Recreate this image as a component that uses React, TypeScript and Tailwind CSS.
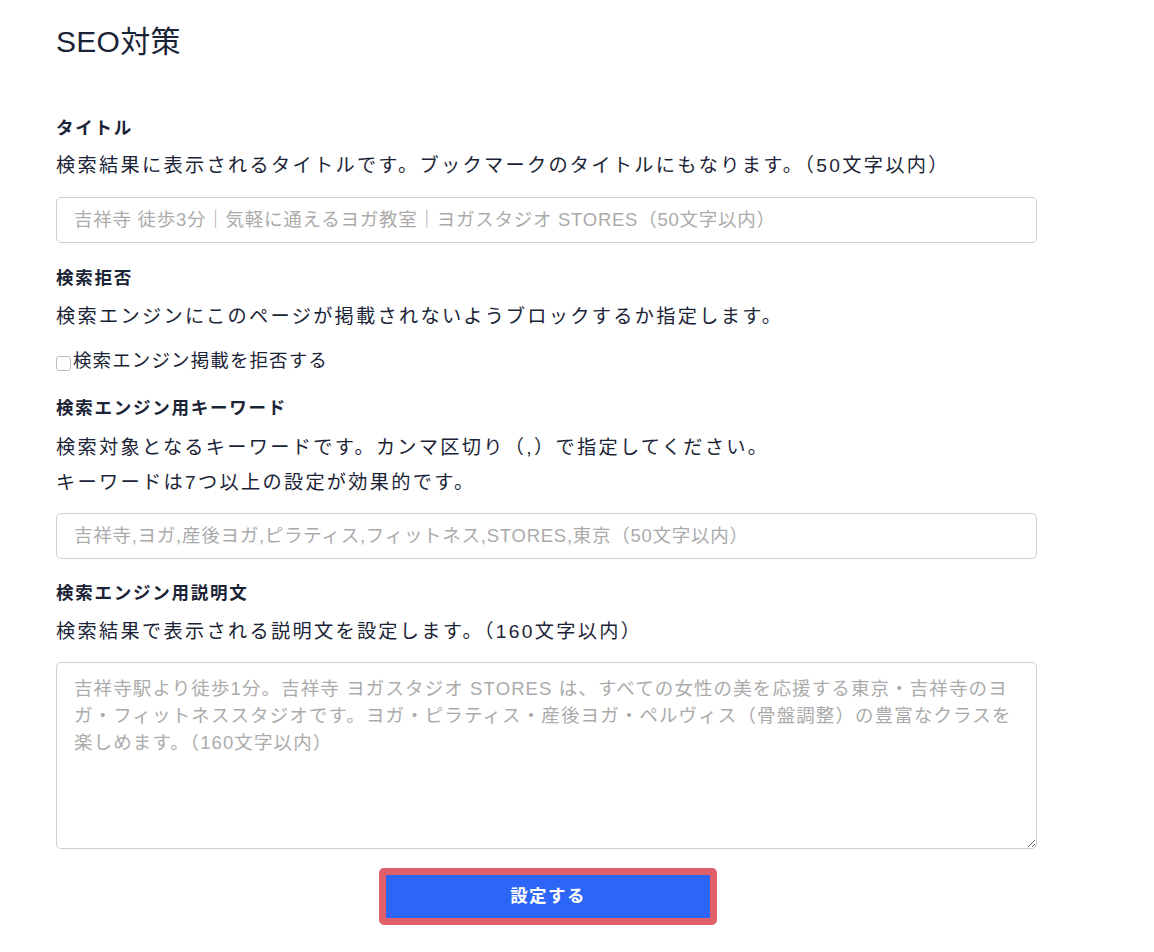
import React from "react";

const font = { fontFamily: '"Liberation Sans", "Noto Sans CJK JP", "Noto Sans", sans-serif' };

export default function App() {
  return (
    <div className="min-h-[952px] w-[1154px] bg-white text-[#1b2436]" style={font}>
      <div className="pl-[56px] w-[1037px]">
        <h1 className="pt-[22px] text-[30px] leading-[40px] font-normal tracking-[0.01em]">SEO対策</h1>

        <h2 className="mt-[54px] text-[17.5px] leading-[24px] font-bold tracking-[0.1em]">タイトル</h2>
        <p className="mt-[14px] text-[19.2px] leading-[24px] tracking-[0.12em]">
          検索結果に表示されるタイトルです。ブックマークのタイトルにもなります。（50文字以内）
        </p>
        <input
          type="text"
          placeholder="吉祥寺 徒歩3分｜気軽に通えるヨガ教室｜ヨガスタジオ STORES（50文字以内）"
          className="mt-[19px] block w-full h-[46px] rounded-[5px] border border-[#cfcfcf] px-[17px] text-[18.5px] tracking-[0.04em] placeholder:text-[#ababab] outline-none"
          style={font}
        />

        <h2 className="mt-[23px] text-[17.5px] leading-[24px] font-bold tracking-[0.1em]">検索拒否</h2>
        <p className="mt-[15px] text-[19.2px] leading-[24px] tracking-[0.12em]">
          検索エンジンにこのページが掲載されないようブロックするか指定します。
        </p>
        <label className="mt-[20px] flex items-center text-[18.5px] leading-[24px] tracking-[0.06em]">
          <span className="inline-block w-[15px] h-[15px] mt-[4px] rounded-[3px] border border-[#bdbdbd] bg-white" />
          <span className="ml-[2px]">検索エンジン掲載を拒否する</span>
        </label>

        <h2 className="mt-[23px] text-[17.5px] leading-[24px] font-bold tracking-[0.1em]">検索エンジン用キーワード</h2>
        <p className="mt-[10px] text-[19.2px] leading-[35px] tracking-[0.12em]">
          検索対象となるキーワードです。カンマ区切り（,）で指定してください。
          <br />
          キーワードは7つ以上の設定が効果的です。
        </p>
        <input
          type="text"
          placeholder="吉祥寺,ヨガ,産後ヨガ,ピラティス,フィットネス,STORES,東京（50文字以内）"
          className="mt-[13px] block w-full h-[46px] rounded-[5px] border border-[#cfcfcf] px-[17px] text-[18.5px] tracking-[0.04em] placeholder:text-[#ababab] outline-none"
          style={font}
        />

        <h2 className="mt-[22px] text-[17.5px] leading-[24px] font-bold tracking-[0.1em]">検索エンジン用説明文</h2>
        <p className="mt-[15px] text-[19.2px] leading-[24px] tracking-[0.12em]">
          検索結果で表示される説明文を設定します。（160文字以内）
        </p>
        <textarea
          placeholder="吉祥寺駅より徒歩1分。吉祥寺 ヨガスタジオ STORES は、すべての女性の美を応援する東京・吉祥寺のヨガ・フィットネススタジオです。ヨガ・ピラティス・産後ヨガ・ペルヴィス（骨盤調整）の豊富なクラスを楽しめます。（160文字以内）"
          className="mt-[18px] block w-full h-[187px] rounded-[5px] border border-[#cfcfcf] px-[17px] pt-[12px] text-[18.5px] leading-[27px] tracking-[0.06em] placeholder:text-[#ababab] outline-none resize-y"
          style={font}
        />

        <div className="mt-[19px] flex justify-center">
          <button
            className="ml-[3px] w-[338px] h-[57px] rounded-[5px] border-[7px] border-[#e0606b] bg-[#2d66f6] text-white text-[17.5px] font-bold tracking-[0.08em]"
            style={font}
          >
            設定する
          </button>
        </div>
      </div>
    </div>
  );
}
